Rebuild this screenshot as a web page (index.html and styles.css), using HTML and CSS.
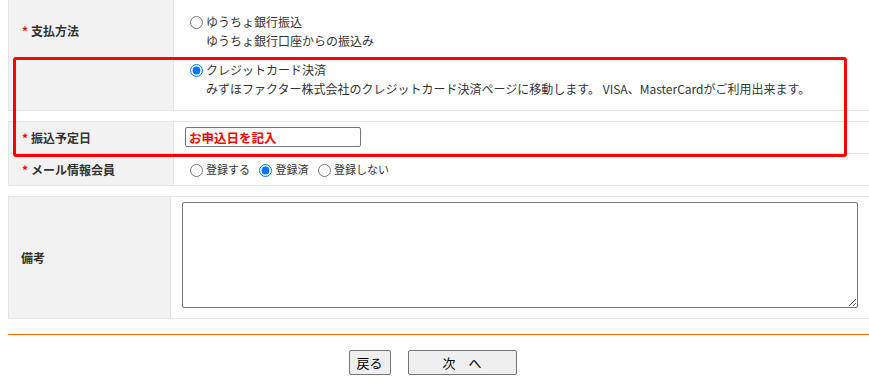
FILE: index.html
```html
<!DOCTYPE html>
<html lang="ja">
  <head>
    <meta charset="UTF-8" />
    <title>お申込み</title>
    <link rel="stylesheet" href="styles.css">
  </head>
  <body>
    <div class="page">
      <table class="form-table first">
        <tr>
          <th class="top"><span class="req">*</span>支払方法</th>
          <td>
            <div class="option">
              <label><input type="radio" name="pay">ゆうちょ銀行振込</label>
              <div class="note">ゆうちょ銀行口座からの振込み</div>
            </div>
            <div class="option">
              <label><input type="radio" name="pay" checked>クレジットカード決済</label>
              <div class="note">みずほファクター株式会社のクレジットカード決済ページに移動します。 VISA、MasterCardがご利用出来ます。</div>
            </div>
          </td>
        </tr>
      </table>

      <table class="form-table">
        <tr>
          <th><span class="req">*</span>振込予定日</th>
          <td class="input-cell"><input type="text" class="date-input" value="お申込日を記入"></td>
        </tr>
        <tr>
          <th><span class="req">*</span>メール情報会員</th>
          <td class="radio-cell">
            <label><input type="radio" name="mail">登録する</label>
            <label><input type="radio" name="mail" checked>登録済</label>
            <label><input type="radio" name="mail">登録しない</label>
          </td>
        </tr>
      </table>

      <table class="form-table">
        <tr>
          <th class="plain">備考</th>
          <td class="memo-cell"><textarea class="memo"></textarea></td>
        </tr>
      </table>

      <div class="rule"></div>

      <div class="buttons">
        <button type="button" class="back">戻る</button>
        <button type="button" class="next">次　へ</button>
      </div>

      <!-- annotation frame drawn over the form -->
      <div class="highlight"></div>
    </div>
  </body>
</html>
```

FILE: styles.css
```css
body {
  margin: 0;
  font-family: "Noto Sans CJK JP", "Noto Sans", sans-serif;
  font-size: 12px;
  color: #333;
  overflow: hidden;
}

.page {
  position: relative;
  margin-left: 8px;
}

.form-table {
  width: 100%;
  border-collapse: collapse;
  margin-top: 10px;
}

.form-table.first {
  margin-top: 0;
}

.form-table th,
.form-table td {
  border: 1px solid #e4e4e4;
  border-right: none;
  line-height: 19px;
  padding: 6px 11px;
}

.form-table.first td,
.form-table.first th {
  border-top: none;
}

.form-table th {
  width: 140px;
  background-color: #f2f2f2;
  text-align: left;
  font-weight: bold;
  padding-left: 13px;
  color: #333;
}

.form-table th.top {
  vertical-align: top;
  padding-top: 21px;
}

.form-table th.plain {
  padding-left: 12px;
}

.req {
  color: #ff0000;
  margin-right: 3px;
}

.form-table.first td {
  padding-top: 12px;
  padding-bottom: 12px;
}

.option + .option {
  margin-top: 10px;
}

.note {
  padding-left: 21px;
}

input[type="radio"] {
  margin: 3px 3px 0 5px;
  vertical-align: -2px;
}

.form-table td.radio-cell {
  font-size: 11px;
}

.radio-cell label {
  margin-right: 2px;
}

.radio-cell input[type="radio"] {
  vertical-align: -3px;
}

.form-table td.input-cell {
  padding-top: 5px;
  padding-bottom: 6px;
}

.date-input {
  display: block;
  box-sizing: border-box;
  width: 176px;
  height: 20px;
  border: 1px solid #767676;
  border-radius: 2px;
  padding: 0 3px;
  font-family: inherit;
  font-size: 12.5px;
  font-weight: bold;
  color: #ff0000;
}

.form-table td.memo-cell {
  padding-top: 5px;
  padding-bottom: 10px;
}

.memo {
  display: block;
  box-sizing: border-box;
  width: 676px;
  height: 106px;
  border: 1px solid #767676;
  border-radius: 2px;
}

.rule {
  height: 1px;
  margin-top: 15px;
  background-color: #ff6600;
}

.buttons {
  display: flex;
  justify-content: center;
  gap: 17px;
  margin-top: 15px;
  margin-right: 12px;
}

.buttons button {
  box-sizing: border-box;
  height: 25px;
  padding: 0;
  background-color: #efefef;
  border: 1px solid #767676;
  border-radius: 2px;
  font-family: inherit;
  font-size: 13px;
  color: #000;
}

.back {
  width: 42px;
}

.next {
  width: 109px;
}

.highlight {
  position: absolute;
  left: 5px;
  top: 57px;
  width: 834px;
  height: 100px;
  box-sizing: border-box;
  border: 3px solid #ff0000;
  border-radius: 3px;
}
```
